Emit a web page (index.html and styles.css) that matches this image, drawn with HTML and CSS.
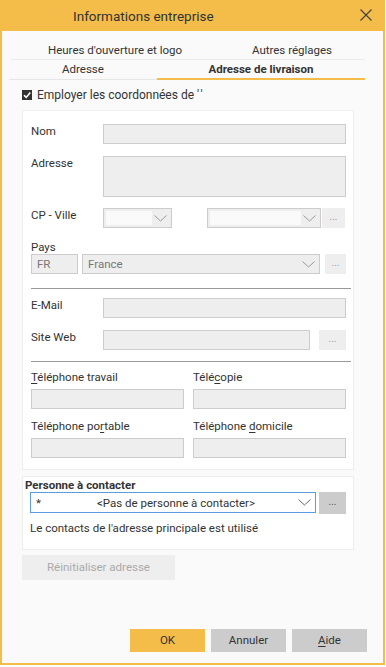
FILE: index.html
```html
<!DOCTYPE html>
<html lang="fr">
<head>
<meta charset="UTF-8" />
<meta name="viewport" content="width=device-width, initial-scale=1" />
<title>Informations entreprise</title>
<link rel="stylesheet" href="styles.css">
</head>
<body>
  <div class="window">
    <!-- Title bar -->
    <div class="titlebar">
      <span class="title">Informations entreprise</span>
      <svg class="close" width="12" height="12" viewBox="0 0 12 12">
        <path d="M0.5 0.5 L11.5 11.5 M11.5 0.5 L0.5 11.5" stroke="#444" stroke-width="1.2" fill="none" />
      </svg>
    </div>

    <!-- Tabs -->
    <div class="tabs tabs-top">
      <div class="tab tab-hours">Heures d'ouverture et logo</div>
      <div class="tab tab-other">Autres réglages</div>
    </div>
    <div class="tabs tabs-bottom">
      <div class="tab tab-address">Adresse</div>
      <div class="tab tab-delivery active">Adresse de livraison</div>
    </div>

    <label class="check-row">
      <span class="checkbox">
        <svg width="10" height="10" viewBox="0 0 10 10">
          <path d="M2 5.2 L4.2 7.4 L8.3 2.4" stroke="#fff" stroke-width="1.6" fill="none" />
        </svg>
      </span>
      Employer les coordonnées de&nbsp;<span class="quotes">''</span>
    </label>

    <!-- Address panel -->
    <div class="panel panel-address">
      <div class="row row-nom">
        <span class="label">Nom</span>
        <div class="field w-245"></div>
      </div>
      <div class="row row-adresse">
        <span class="label">Adresse</span>
        <div class="field area w-245"></div>
      </div>
      <div class="row row-cp">
        <span class="label">CP - Ville</span>
        <div class="select w-69">
          <span class="select-inner"></span>
          <svg class="chevron" width="13" height="7" viewBox="0 0 13 7"><path d="M0.5 0.5 L6.5 6 L12.5 0.5" stroke="#999" fill="none" /></svg>
        </div>
        <div class="select w-114 ville">
          <span class="select-inner"></span>
          <svg class="chevron" width="13" height="7" viewBox="0 0 13 7"><path d="M0.5 0.5 L6.5 6 L12.5 0.5" stroke="#999" fill="none" /></svg>
        </div>
        <div class="dots btn-cp">...</div>
      </div>

      <div class="label pays-label">Pays</div>
      <div class="row row-pays">
        <div class="field code">FR</div>
        <div class="select w-238 france">
          <span class="select-text">France</span>
          <svg class="chevron" width="13" height="7" viewBox="0 0 13 7"><path d="M0.5 0.5 L6.5 6 L12.5 0.5" stroke="#999" fill="none" /></svg>
        </div>
        <div class="dots btn-pays">...</div>
      </div>

      <div class="separator sep-1"></div>

      <div class="row row-mail">
        <span class="label">E-Mail</span>
        <div class="field w-243"></div>
      </div>
      <div class="row row-web">
        <span class="label">Site Web</span>
        <div class="field w-207"></div>
        <div class="dots btn-web">...</div>
      </div>

      <div class="separator sep-2"></div>

      <div class="phones">
        <div class="phone">
          <span class="label"><u>T</u>éléphone travail</span>
          <div class="field"></div>
        </div>
        <div class="phone">
          <span class="label">Télé<u>c</u>opie</span>
          <div class="field"></div>
        </div>
        <div class="phone">
          <span class="label">Téléphone po<u>r</u>table</span>
          <div class="field"></div>
        </div>
        <div class="phone">
          <span class="label">Téléphone <u>d</u>omicile</span>
          <div class="field"></div>
        </div>
      </div>
    </div>

    <!-- Contact panel -->
    <div class="panel panel-contact">
      <div class="contact-title">Personne à contacter</div>
      <div class="row row-contact">
        <div class="select contact-select">
          <span class="star">*</span>
          <span class="contact-text">&lt;Pas de personne à contacter&gt;</span>
          <svg class="chevron" width="13" height="7" viewBox="0 0 13 7"><path d="M0.5 0.5 L6.5 6 L12.5 0.5" stroke="#666" fill="none" /></svg>
        </div>
        <div class="dots btn-contact">...</div>
      </div>
      <div class="contact-info">Le contacts de l'adresse principale est utilisé</div>
    </div>

    <div class="reset-btn">Réinitialiser adresse</div>

    <!-- Footer buttons -->
    <div class="footer">
      <div class="btn btn-ok">OK</div>
      <div class="btn">Annuler</div>
      <div class="btn"><u>A</u>ide</div>
    </div>
  </div>
</body>
</html>
```

FILE: styles.css
```css
/* Base */
* {
  margin: 0;
  padding: 0;
  box-sizing: border-box;
}
body {
  font-family: Roboto, 'Noto Sans', sans-serif;
  font-size: 11.5px;
  color: #333;
  background: #fff;
}
u {
  text-decoration: underline;
  text-underline-offset: 2px;
}

/* Window frame */
.window {
  width: 385px;
  height: 665px;
  border: 2px solid #f4bd4a;
  border-top: 0;
  background: #fafafa;
  display: flex;
  flex-direction: column;
}
.titlebar {
  height: 31px;
  background: #f4bd4a;
  display: flex;
  align-items: center;
  padding-left: 73px;
  padding-right: 13px;
  margin: 0 -2px;
}
.title {
  font-size: 13.5px;
  color: #333;
  flex: 1;
}
.close {
  margin-top: -1px;
}

/* Tabs */
.tabs {
  display: flex;
}
.tab {
  text-align: center;
  line-height: 18px;
  font-size: 11.5px;
}
.tabs-top {
  margin-left: 9px;
  width: 354px;
  padding-top: 10px;
  border-bottom: 1px solid #ececec;
}
.tab-hours {
  width: 208px;
}
.tab-other {
  width: 146px;
}
.tabs-bottom {
  margin-left: 7px;
  width: 356px;
  align-items: flex-end;
}
.tab-address {
  width: 148px;
  padding-bottom: 1px;
  border-bottom: 1px solid #e6e6e6;
}
.tab-delivery {
  width: 208px;
  border-bottom: 2px solid #f4bd4a;
  font-weight: 700;
}

/* Checkbox */
.check-row {
  display: flex;
  align-items: center;
  margin: 10px 0 0 20px;
  height: 10px;
  font-size: 12px;
  line-height: 12px;
}
.checkbox {
  width: 10px;
  height: 10px;
  background: #333;
  margin-right: 5px;
  display: flex;
}
.quotes {
  letter-spacing: 2px;
}

/* Panels */
.panel {
  margin-left: 20px;
  width: 332px;
  background: #fff;
  border: 1px solid #eeeeee;
}
.panel-address {
  margin-top: 10px;
  height: 360px;
  padding: 0 7px 0 8px;
}
.row {
  display: flex;
  align-items: flex-start;
}
.label {
  line-height: 14px;
  width: 72px;
  flex-shrink: 0;
}
.field {
  height: 20px;
  background: #eeeeee;
  border: 1px solid #cccccc;
}
.area {
  height: 41px;
}
.w-245 { width: 245px; }
.w-243 { width: 243px; }
.w-207 { width: 207px; }
.w-69 { width: 69px; }
.w-114 { width: 114px; }
.w-238 { width: 238px; }

.row-nom { margin-top: 13px; }
.row-adresse { margin-top: 12px; }
.row-cp { margin-top: 11px; }
.pays-label { margin-top: 12px; }
.row-mail { margin-top: 9px; }
.row-web { margin-top: 12px; }

/* Selects */
.select {
  height: 20px;
  background: #eeeeee;
  border: 1px solid #cccccc;
  display: flex;
  align-items: center;
  position: relative;
}
.select-inner {
  width: 46px;
  height: 14px;
  margin-left: 2px;
  background: #fafafa;
}
.ville {
  margin-left: 35px;
}
.ville .select-inner {
  width: 91px;
}
.chevron {
  position: absolute;
  right: 4px;
  top: 6px;
}
.dots {
  background: #eeeeee;
  color: #999;
  text-align: center;
  font-size: 10px;
  line-height: 18px;
}
.btn-cp {
  width: 23px;
  height: 20px;
  margin-left: 1px;
}
.code {
  width: 47px;
  color: #777;
  padding-left: 5px;
  line-height: 18px;
}
.france {
  margin-left: 4px;
}
.select-text {
  color: #777;
  padding-left: 5px;
}
.btn-pays {
  width: 21px;
  height: 20px;
  margin-left: 5px;
}
.btn-web {
  width: 27px;
  height: 20px;
  margin-left: 9px;
}

/* Separators */
.separator {
  height: 1px;
  background: #999;
  width: 320px;
}
.sep-1 { margin-top: 14px; }
.sep-2 { margin-top: 11px; }

/* Phones */
.phones {
  display: grid;
  grid-template-columns: 153px 153px;
  column-gap: 9px;
  row-gap: 10px;
  margin-top: 8px;
}
.phone .label {
  width: auto;
  display: block;
  margin-bottom: 5px;
}

/* Contact panel */
.panel-contact {
  margin-top: 6px;
  height: 74px;
  padding: 1px 0 0 2px;
}
.contact-title {
  font-weight: 700;
  line-height: 14px;
}
.row-contact {
  margin-left: 5px;
}
.contact-select {
  width: 286px;
  height: 21px;
  background: #fff;
  border: 1px solid #5b9be0;
}
.star {
  padding-left: 5px;
  width: 66px;
}
.contact-select .chevron {
  top: 6px;
}
.btn-contact {
  width: 27px;
  height: 22px;
  margin-left: 3px;
  background: #cccccc;
  color: #555;
  line-height: 20px;
}
.contact-info {
  margin: 7px 0 0 5px;
  line-height: 14px;
}

/* Reset button */
.reset-btn {
  margin: 5px 0 0 20px;
  width: 153px;
  height: 25px;
  background: #eeeeee;
  color: #aaaaaa;
  text-align: center;
  line-height: 25px;
}

/* Footer */
.footer {
  margin-top: auto;
  display: flex;
  justify-content: flex-end;
  gap: 6px;
  padding: 0 16px 11px 0;
}
.btn {
  width: 75px;
  height: 23px;
  background: #cccccc;
  text-align: center;
  line-height: 23px;
  color: #333;
}
.btn-ok {
  background: #f4bd4a;
}
```
